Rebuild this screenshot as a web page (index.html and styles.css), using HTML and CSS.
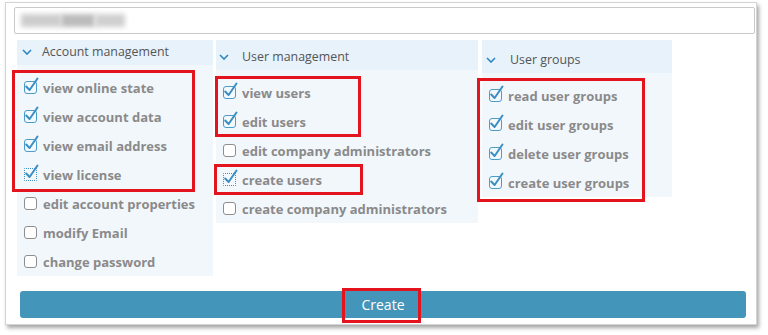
FILE: index.html
```html
<!DOCTYPE html>
<html lang="en">
<head>
    <meta charset="UTF-8">
    <meta name="viewport" content="width=device-width, initial-scale=1.0">
    <title>Create user role</title>
    <link rel="stylesheet" href="styles.css">
</head>
<body>

    <div class="panel">
        <div class="name-field">
            <span class="smudge smudge-a"></span><span class="smudge smudge-b"></span><span class="smudge smudge-c"></span>
        </div>

        <div class="columns">
            <div class="group group-account">
                <div class="group-head"><svg class="chevron" viewBox="0 0 10 6"><polyline points="1,1 5,5 9,1"/></svg>Account management</div>
                <ul class="perm-list">
                    <li class="perm checked"><span class="box"></span>view online state</li>
                    <li class="perm checked"><span class="box"></span>view account data</li>
                    <li class="perm checked"><span class="box"></span>view email address</li>
                    <li class="perm checked focus"><span class="box"></span>view license</li>
                    <li class="perm"><span class="box"></span>edit account properties</li>
                    <li class="perm"><span class="box"></span>modify Email</li>
                    <li class="perm"><span class="box"></span>change password</li>
                </ul>
            </div>
            <div class="group group-users">
                <div class="group-head"><svg class="chevron" viewBox="0 0 10 6"><polyline points="1,1 5,5 9,1"/></svg>User management</div>
                <ul class="perm-list">
                    <li class="perm checked"><span class="box"></span>view users</li>
                    <li class="perm checked"><span class="box"></span>edit users</li>
                    <li class="perm"><span class="box"></span>edit company administrators</li>
                    <li class="perm checked focus"><span class="box"></span>create users</li>
                    <li class="perm"><span class="box"></span>create company administrators</li>
                </ul>
            </div>
            <div class="group group-groups">
                <div class="group-head"><svg class="chevron" viewBox="0 0 10 6"><polyline points="1,1 5,5 9,1"/></svg>User groups</div>
                <ul class="perm-list">
                    <li class="perm checked"><span class="box"></span>read user groups</li>
                    <li class="perm checked"><span class="box"></span>edit user groups</li>
                    <li class="perm checked"><span class="box"></span>delete user groups</li>
                    <li class="perm checked"><span class="box"></span>create user groups</li>
                </ul>
            </div>
        </div>

        <button class="create-btn">Create</button>
    </div>

    <!-- red annotation frames -->
    <div class="mark mark-1"></div>
    <div class="mark mark-2"></div>
    <div class="mark mark-3"></div>
    <div class="mark mark-4"></div>
    <div class="mark mark-5"></div>

    <script>
        // put the tick into every checked box
        const tick = '<svg viewBox="0 0 16 17"><polyline points="3.2,9.5 6.6,13 14.5,1.5"/></svg>';
        document.querySelectorAll('.perm.checked .box').forEach(box => {
            box.innerHTML = tick;
        });
    </script>

</body>
</html>
```

FILE: styles.css
```css
body {
    margin: 0;
    padding: 0;
    font-family: "Open Sans", "Noto Sans", sans-serif;
    background-color: #ffffff;
    position: relative;
    height: 335px;
    overflow: hidden;
}
.panel {
    box-sizing: border-box;
    margin: 2px 0 0 5px;
    width: 752px;
    height: 323px;
    padding: 4px 1px 0 8px;
    border: 1px solid #d4d4d4;
    background-color: #ffffff;
    box-shadow: 2px 3px 4px rgba(0, 0, 0, 0.35);
}
.name-field {
    box-sizing: border-box;
    height: 27px;
    border: 1px solid #c9c9c9;
    border-radius: 2px;
    padding: 6px 0 0 6px;
    display: flex;
}
.smudge {
    display: inline-block;
    height: 13px;
    background-color: #c4c4c4;
    filter: blur(2.5px);
}
.smudge-a { width: 40px; background-color: #cdcdcd; }
.smudge-b { width: 34px; background-color: #bcbcbc; }
.smudge-c { width: 30px; background-color: #d0d0d0; }

.columns {
    display: flex;
    align-items: flex-start;
    margin: 6px 0 0 3px;
}
.group {
    background-color: #f2f7fc;
}
.group-account { width: 196px; }
.group-users { width: 262px; margin-left: 3px; }
.group-groups { width: 190px; margin-left: 4px; }

.group-head {
    display: flex;
    align-items: center;
    height: 20px;
    padding: 1px 0 4px 0;
    background-color: #e7f2fb;
    color: #555555;
    font-size: 12.4px;
}
.group-users .group-head { padding-top: 6px; }
.group-groups .group-head { padding-top: 9px; }

.chevron {
    width: 10px;
    height: 6px;
    margin: 2px 10px 0 5px;
    fill: none;
    stroke: #2f86c4;
    stroke-width: 1.6;
}
.group-users .chevron { margin-left: 3px; margin-right: 13px; }
.group-groups .chevron { margin-left: 4px; margin-right: 14px; }

.perm-list {
    list-style: none;
    margin: 0;
    padding: 8px 0 0 0;
}
.perm {
    display: flex;
    align-items: center;
    height: 29px;
    padding-left: 7px;
    color: #8a8a8a;
    font-size: 13px;
    font-weight: bold;
}
.box {
    position: relative;
    box-sizing: border-box;
    width: 13px;
    height: 13px;
    margin-right: 6px;
    border: 1px solid #8e8e8e;
    border-radius: 3px;
    background-color: #ffffff;
    flex: 0 0 auto;
}
.perm.checked .box {
    border-color: #4a9ccb;
    background-color: #f4f9fd;
}
.perm.focus .box {
    border: 1px dotted #3d8fc4;
    border-radius: 1px;
}
.box svg {
    position: absolute;
    left: -2px;
    top: -5px;
    width: 16px;
    height: 17px;
    fill: none;
    stroke: #3b8fc2;
    stroke-width: 2;
    stroke-linecap: round;
    stroke-linejoin: round;
}

.create-btn {
    display: block;
    box-sizing: border-box;
    width: 726px;
    height: 27px;
    margin: 15px 0 0 6px;
    border: none;
    border-radius: 3px;
    background-color: #4495ba;
    color: #ffffff;
    font-family: "Open Sans", "Noto Sans", sans-serif;
    font-size: 14px;
}

.mark {
    position: absolute;
    box-sizing: border-box;
    border: 3px solid #e3141d;
}
.mark-1 { left: 12px; top: 70px; width: 183px; height: 122px; }
.mark-2 { left: 215px; top: 76px; width: 146px; height: 61px; }
.mark-3 { left: 214px; top: 164px; width: 149px; height: 31px; }
.mark-4 { left: 477px; top: 78px; width: 168px; height: 124px; }
.mark-5 { left: 342px; top: 288px; width: 79px; height: 35px; }
```
